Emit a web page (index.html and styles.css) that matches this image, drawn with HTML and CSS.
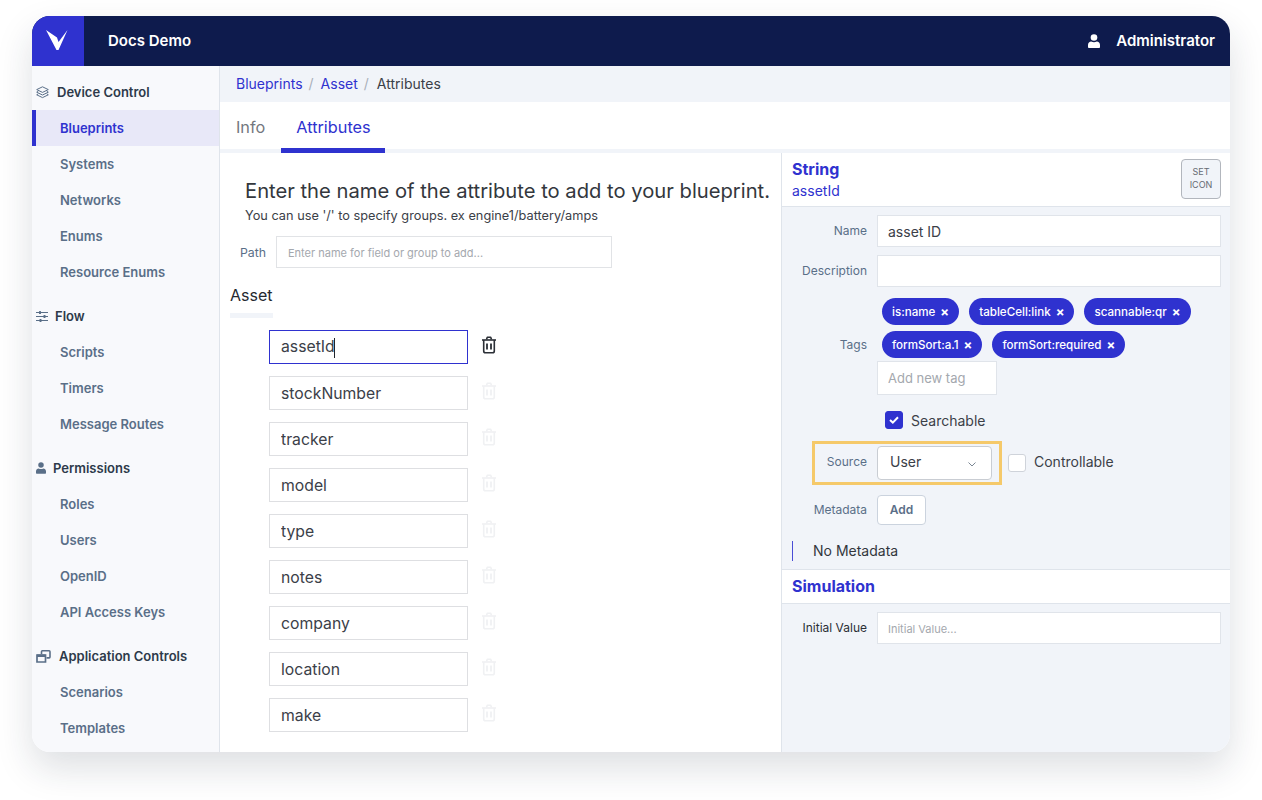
FILE: index.html
```html
<!DOCTYPE html>
<html>
    <head>
        <meta charset="UTF-8">
        <title>Docs Demo - Attributes</title>
        <link rel="stylesheet" href="styles.css">
    </head>
    <body>
        <div class="window">
            <header class="topbar">
                <div class="logo">
                    <svg width="24" height="24" viewBox="0 0 24 24"><path d="M0 1 L11 8.500 L12.500 13 L21.500 1 L12.500 21 L10.500 21 Z" fill="#fff"/></svg>
                </div>
                <div class="app-name">Docs Demo</div>
                <div class="user">
                    <svg width="12" height="14" viewBox="0 0 12 14"><circle cx="6" cy="3.500" r="3.300" fill="#fff"/><path d="M0.800 14 C0.300 14 0 13.600 0 13 L0 11 C0 9 1.500 7.600 3.200 7.600 C4.800 8.500 7.200 8.500 8.800 7.600 C10.500 7.600 12 9 12 11 L12 13 C12 13.600 11.700 14 11.200 14 Z" fill="#fff"/></svg>
                    <span>Administrator</span>
                </div>
            </header>
            <div class="body">
                <nav class="sidebar">
                    <div class="nav-group">
                        <div class="nav-head">
                            <svg class="head-icon" width="13" height="13" viewBox="0 0 13 13" fill="none" stroke="#5a6f88" stroke-width="1" stroke-linejoin="round"><path d="M6.500 0.800 L12.300 3.600 L6.500 6.400 L0.700 3.600 Z"/><path d="M2.200 5.300 L0.700 6.200 L6.500 9 L12.300 6.200 L10.800 5.300"/><path d="M2.200 7.900 L0.700 8.800 L6.500 11.600 L12.300 8.800 L10.800 7.900"/></svg>
                            <span class="head-device">Device Control</span>
                        </div>
                        <a class="nav-item active">Blueprints</a>
                        <a class="nav-item">Systems</a>
                        <a class="nav-item">Networks</a>
                        <a class="nav-item">Enums</a>
                        <a class="nav-item">Resource Enums</a>
                    </div>
                    <div class="nav-group">
                        <div class="nav-head">
                            <svg class="head-icon" width="12" height="11" viewBox="0 0 12 11" fill="#5a6f88"><rect x="0" y="1" width="12" height="1"/><rect x="0" y="5" width="12" height="1"/><rect x="0" y="9" width="12" height="1"/><rect x="3" y="0" width="2" height="3" rx="0.500"/><rect x="7.500" y="4" width="2" height="3" rx="0.500"/><rect x="3.500" y="8" width="2" height="3" rx="0.500"/></svg>
                            <span class="head-flow">Flow</span>
                        </div>
                        <a class="nav-item">Scripts</a>
                        <a class="nav-item">Timers</a>
                        <a class="nav-item">Message Routes</a>
                    </div>
                    <div class="nav-group">
                        <div class="nav-head">
                            <svg class="head-icon" width="10" height="12" viewBox="0 0 12 14"><circle cx="6" cy="3.500" r="3.300" fill="#5a6f88"/><path d="M0.800 14 C0.300 14 0 13.600 0 13 L0 11 C0 9 1.500 7.600 3.200 7.600 C4.800 8.500 7.200 8.500 8.800 7.600 C10.500 7.600 12 9 12 11 L12 13 C12 13.600 11.700 14 11.200 14 Z" fill="#5a6f88"/></svg>
                            <span class="head-perm">Permissions</span>
                        </div>
                        <a class="nav-item">Roles</a>
                        <a class="nav-item">Users</a>
                        <a class="nav-item">OpenID</a>
                        <a class="nav-item">API Access Keys</a>
                    </div>
                    <div class="nav-group">
                        <div class="nav-head">
                            <svg class="head-icon" width="15" height="13" viewBox="0 0 15 13" fill="none" stroke="#5a6f88"><path d="M5.500 4 L5.500 1.700 Q5.500 0.800 6.400 0.800 L13.100 0.800 Q14 0.800 14 1.700 L14 7 Q14 7.900 13.100 7.900 L10.500 7.900" stroke-width="1.600"/><path d="M1 5 L9.500 5 L9.500 12 L1 12 Z" stroke-width="1.700"/><rect x="1" y="4.500" width="8.500" height="2.500" fill="#5a6f88" stroke="none"/></svg>
                            <span class="head-app">Application Controls</span>
                        </div>
                        <a class="nav-item">Scenarios</a>
                        <a class="nav-item">Templates</a>
                    </div>
                </nav>
                <div class="main">
                    <div class="crumbs">
                        <a>Blueprints</a><span class="sep">/</span><a>Asset</a><span class="sep">/</span><span class="current">Attributes</span>
                    </div>
                    <div class="tabs">
                        <div class="tab">Info</div>
                        <div class="tab selected">Attributes</div>
                    </div>
                    <div class="panes">
                        <section class="left-pane">
                            <div class="intro">
                                <h2>Enter the name of the attribute to add to your blueprint.</h2>
                                <p>You can use '/' to specify groups. ex engine1/battery/amps</p>
                            </div>
                            <div class="path-row">
                                <label>Path</label>
                                <input class="path-input" placeholder="Enter name for field or group to add...">
                            </div>
                            <div class="group-name">Asset</div>
                            <div class="group-bar"></div>
                            <div class="attr-list">
                                <div class="attr-row">
                                    <div class="attr-field focused">assetI<span class="last">d</span><span class="caret"></span></div>
                                    <svg class="trash on" width="16" height="18" viewBox="0 0 16 18" fill="none" stroke="currentColor" stroke-width="1.600" stroke-linejoin="round"><path d="M1 4 L15 4"/><path d="M5.500 3.500 L6.300 1.300 L9.700 1.300 L10.500 3.500"/><path d="M2.700 4 L2.700 15 Q2.700 16.800 4.500 16.800 L11.500 16.800 Q13.300 16.800 13.300 15 L13.300 4"/><path d="M6 7.500 L6 13.500 M10 7.500 L10 13.500" stroke-width="1.800"/></svg>
                                </div>
                                <div class="attr-row">
                                    <input class="attr-field" value="stockNumber">
                                    <svg class="trash" width="16" height="18" viewBox="0 0 16 18" fill="none" stroke="currentColor" stroke-width="1.600" stroke-linejoin="round"><path d="M1 4 L15 4"/><path d="M5.500 3.500 L6.300 1.300 L9.700 1.300 L10.500 3.500"/><path d="M2.700 4 L2.700 15 Q2.700 16.800 4.500 16.800 L11.500 16.800 Q13.300 16.800 13.300 15 L13.300 4"/><path d="M6 7.500 L6 13.500 M10 7.500 L10 13.500" stroke-width="1.800"/></svg>
                                </div>
                                <div class="attr-row">
                                    <input class="attr-field" value="tracker">
                                    <svg class="trash" width="16" height="18" viewBox="0 0 16 18" fill="none" stroke="currentColor" stroke-width="1.600" stroke-linejoin="round"><path d="M1 4 L15 4"/><path d="M5.500 3.500 L6.300 1.300 L9.700 1.300 L10.500 3.500"/><path d="M2.700 4 L2.700 15 Q2.700 16.800 4.500 16.800 L11.500 16.800 Q13.300 16.800 13.300 15 L13.300 4"/><path d="M6 7.500 L6 13.500 M10 7.500 L10 13.500" stroke-width="1.800"/></svg>
                                </div>
                                <div class="attr-row">
                                    <input class="attr-field" value="model">
                                    <svg class="trash" width="16" height="18" viewBox="0 0 16 18" fill="none" stroke="currentColor" stroke-width="1.600" stroke-linejoin="round"><path d="M1 4 L15 4"/><path d="M5.500 3.500 L6.300 1.300 L9.700 1.300 L10.500 3.500"/><path d="M2.700 4 L2.700 15 Q2.700 16.800 4.500 16.800 L11.500 16.800 Q13.300 16.800 13.300 15 L13.300 4"/><path d="M6 7.500 L6 13.500 M10 7.500 L10 13.500" stroke-width="1.800"/></svg>
                                </div>
                                <div class="attr-row">
                                    <input class="attr-field" value="type">
                                    <svg class="trash" width="16" height="18" viewBox="0 0 16 18" fill="none" stroke="currentColor" stroke-width="1.600" stroke-linejoin="round"><path d="M1 4 L15 4"/><path d="M5.500 3.500 L6.300 1.300 L9.700 1.300 L10.500 3.500"/><path d="M2.700 4 L2.700 15 Q2.700 16.800 4.500 16.800 L11.500 16.800 Q13.300 16.800 13.300 15 L13.300 4"/><path d="M6 7.500 L6 13.500 M10 7.500 L10 13.500" stroke-width="1.800"/></svg>
                                </div>
                                <div class="attr-row">
                                    <input class="attr-field" value="notes">
                                    <svg class="trash" width="16" height="18" viewBox="0 0 16 18" fill="none" stroke="currentColor" stroke-width="1.600" stroke-linejoin="round"><path d="M1 4 L15 4"/><path d="M5.500 3.500 L6.300 1.300 L9.700 1.300 L10.500 3.500"/><path d="M2.700 4 L2.700 15 Q2.700 16.800 4.500 16.800 L11.500 16.800 Q13.300 16.800 13.300 15 L13.300 4"/><path d="M6 7.500 L6 13.500 M10 7.500 L10 13.500" stroke-width="1.800"/></svg>
                                </div>
                                <div class="attr-row">
                                    <input class="attr-field" value="company">
                                    <svg class="trash" width="16" height="18" viewBox="0 0 16 18" fill="none" stroke="currentColor" stroke-width="1.600" stroke-linejoin="round"><path d="M1 4 L15 4"/><path d="M5.500 3.500 L6.300 1.300 L9.700 1.300 L10.500 3.500"/><path d="M2.700 4 L2.700 15 Q2.700 16.800 4.500 16.800 L11.500 16.800 Q13.300 16.800 13.300 15 L13.300 4"/><path d="M6 7.500 L6 13.500 M10 7.500 L10 13.500" stroke-width="1.800"/></svg>
                                </div>
                                <div class="attr-row">
                                    <input class="attr-field" value="location">
                                    <svg class="trash" width="16" height="18" viewBox="0 0 16 18" fill="none" stroke="currentColor" stroke-width="1.600" stroke-linejoin="round"><path d="M1 4 L15 4"/><path d="M5.500 3.500 L6.300 1.300 L9.700 1.300 L10.500 3.500"/><path d="M2.700 4 L2.700 15 Q2.700 16.800 4.500 16.800 L11.500 16.800 Q13.300 16.800 13.300 15 L13.300 4"/><path d="M6 7.500 L6 13.500 M10 7.500 L10 13.500" stroke-width="1.800"/></svg>
                                </div>
                                <div class="attr-row">
                                    <input class="attr-field" value="make">
                                    <svg class="trash" width="16" height="18" viewBox="0 0 16 18" fill="none" stroke="currentColor" stroke-width="1.600" stroke-linejoin="round"><path d="M1 4 L15 4"/><path d="M5.500 3.500 L6.300 1.300 L9.700 1.300 L10.500 3.500"/><path d="M2.700 4 L2.700 15 Q2.700 16.800 4.500 16.800 L11.500 16.800 Q13.300 16.800 13.300 15 L13.300 4"/><path d="M6 7.500 L6 13.500 M10 7.500 L10 13.500" stroke-width="1.800"/></svg>
                                </div>
                            </div>
                        </section>
                        <section class="right-pane">
                            <div class="type-head">
                                <div>
                                    <div class="type-title">String</div>
                                    <div class="type-key">assetId</div>
                                </div>
                                <div class="set-icon">SET<br>ICON</div>
                            </div>
                            <div class="form">
                                <div class="form-row">
                                    <label>Name</label>
                                    <input class="text-input filled" value="asset ID">
                                </div>
                                <div class="form-row">
                                    <label>Description</label>
                                    <input class="text-input">
                                </div>
                                <div class="tags-row">
                                    <label>Tags</label>
                                    <div class="tags">
                                        <span class="tag">is:name<i>×</i></span>
                                        <span class="tag">tableCell:link<i>×</i></span>
                                        <span class="tag">scannable:qr<i>×</i></span>
                                        <span class="tag">formSort:a.1<i>×</i></span>
                                        <span class="tag">formSort:required<i>×</i></span>
                                    </div>
                                </div>
                                <input class="tag-input" placeholder="Add new tag">
                                <div class="search-row">
                                    <span class="check on">
                                        <svg width="10" height="8" viewBox="0 0 10 8" fill="none" stroke="#fff" stroke-width="2"><path d="M1 4 L3.800 6.600 L9 1.200"/></svg>
                                    </span>
                                    <span>Searchable</span>
                                </div>
                                <div class="source-row">
                                    <div class="source-box">
                                        <label>Source</label>
                                        <div class="select">
                                            <span>User</span>
                                            <svg width="8" height="5" viewBox="0 0 8 5" fill="none" stroke="#7b8794"><path d="M0.500 0.500 L4 4 L7.500 0.500"/></svg>
                                        </div>
                                    </div>
                                    <span class="check"></span>
                                    <span class="check-text">Controllable</span>
                                </div>
                                <div class="meta-row">
                                    <label>Metadata</label>
                                    <button class="add-btn">Add</button>
                                </div>
                                <div class="no-meta">No Metadata</div>
                            </div>
                            <div class="sim-head">Simulation</div>
                            <div class="form sim-form">
                                <div class="form-row">
                                    <label class="dark">Initial Value</label>
                                    <input class="text-input small" placeholder="Initial Value...">
                                </div>
                            </div>
                        </section>
                    </div>
                </div>
            </div>
        </div>
    </body>
</html>
```

FILE: styles.css
```css
*{
    box-sizing: border-box;
}
html, body{
    height: 100%;
}
body{
    margin: 0;
    padding: 16px 32px 48px 32px;
    background-color: #fff;
    font-family: Inter, "Liberation Sans", sans-serif;
    color: #2b2f36;
    overflow: hidden;
}
input{
    font-family: inherit;
    outline: none;
}
input::placeholder{
    color: #a4a8ae;
    opacity: 1;
}
.window{
    width: 1198px;
    height: 736px;
    border-radius: 18px;
    overflow: hidden;
    display: flex;
    flex-direction: column;
    background-color: #fff;
    box-shadow: 0 16px 36px rgba(30, 40, 60, 0.15);
}
.topbar{
    height: 50px;
    flex: none;
    display: flex;
    align-items: center;
    background-color: #0e1b4d;
    color: #fff;
}
.logo{
    width: 52px;
    height: 50px;
    display: flex;
    align-items: center;
    justify-content: center;
    background-color: #2f32cf;
}
.app-name{
    margin-left: 24px;
    font-size: 15px;
    font-weight: 600;
    margin-top: -2px;
}
.user{
    margin-left: auto;
    padding-right: 15px;
    display: flex;
    align-items: center;
    gap: 16px;
    font-size: 15px;
    font-weight: 600;
}
.user span{
    margin-top: -2px;
}
.body{
    flex: 1;
    min-height: 0;
    display: flex;
}
.sidebar{
    width: 188px;
    flex: none;
    padding-top: 8px;
    background-color: #f8f9fc;
    border-right: 1px solid #dfe4eb;
}
.nav-group{
    margin-bottom: 8px;
}
.nav-head{
    height: 36px;
    display: flex;
    align-items: center;
    padding-left: 4px;
    font-size: 13px;
    font-weight: 600;
    color: #2d3a4a;
}
.head-device{
    margin-left: 8px;
}
.head-flow{
    margin-left: 7px;
}
.head-perm{
    margin-left: 7px;
}
.head-app{
    margin-left: 8px;
}
.nav-item{
    height: 36px;
    display: flex;
    align-items: center;
    padding-left: 28px;
    font-size: 13px;
    font-weight: 600;
    color: #5a6f88;
}
.nav-item.active{
    padding-left: 24px;
    border-left: 4px solid #2f32cf;
    background-color: #e8e8f8;
    color: #2f32cf;
}
.main{
    flex: 1;
    min-width: 0;
    display: flex;
    flex-direction: column;
    background-color: #f1f4f9;
}
.crumbs{
    height: 36px;
    flex: none;
    display: flex;
    align-items: center;
    padding: 0 0 2px 16px;
    font-size: 14px;
    color: #2f32cf;
}
.sep{
    margin: 0 7px 0 6px;
    color: #a9b0ba;
}
.current{
    margin-left: 1px;
    color: #3b4048;
}
.tabs{
    height: 47px;
    flex: none;
    display: flex;
    background-color: #fff;
}
.tab{
    padding: 0 16px;
    font-size: 16.300px;
    line-height: 50px;
    color: #73777e;
}
.tab.selected{
    width: 104px;
    height: 51px;
    padding: 0 0 0 15px;
    color: #2f32cf;
    border-bottom: 5px solid #2f32cf;
}
.panes{
    flex: 1;
    min-height: 0;
    margin-top: 4px;
    display: flex;
}
.left-pane{
    width: 562px;
    flex: none;
    padding: 0 0 0 10px;
    background-color: #fff;
    border-right: 1px solid #dfe4eb;
}
.intro{
    padding: 26px 0 0 15px;
}
.intro h2{
    margin: 0;
    font-size: 20.200px;
    font-weight: 400;
    line-height: 24px;
    color: #33373d;
    white-space: nowrap;
}
.intro p{
    margin: 4px 0 0 0;
    font-size: 12.750px;
    line-height: 18px;
    color: #3b4048;
}
.path-row{
    margin-top: 11px;
    display: flex;
    align-items: center;
    padding-left: 10px;
}
.path-row label{
    width: 36px;
    font-size: 12.300px;
    color: #5a6f88;
}
.path-input{
    width: 336px;
    height: 32px;
    padding: 2px 11px 0 11px;
    border: 1px solid #e1e3e6;
    font-size: 11px;
}
.group-name{
    margin-top: 17px;
    font-size: 16px;
    line-height: 20px;
    color: #25292f;
}
.group-bar{
    width: 43px;
    height: 5px;
    margin-top: 8px;
    background-color: #f1f4f9;
}
.attr-list{
    margin-top: 12px;
    padding-left: 39px;
    display: flex;
    flex-direction: column;
    gap: 12px;
}
.attr-row{
    display: flex;
    align-items: center;
    gap: 13px;
}
.attr-field{
    width: 199px;
    height: 34px;
    padding: 0 11px;
    border: 1px solid #dedfe2;
    background-color: #fff;
    font-size: 15.750px;
    line-height: 32px;
    color: #3b4048;
}
.attr-field.focused{
    border-color: #2f32cf;
    white-space: nowrap;
}
.caret{
    display: inline-block;
    width: 1px;
    height: 20px;
    margin-left: -1px;
    vertical-align: middle;
    background-color: #20242a;
}
.trash{
    color: #f0f1f3;
    margin-top: -4px;
}
.trash.on{
    color: #2b2f36;
}
.right-pane{
    flex: 1;
    min-width: 0;
    display: flex;
    flex-direction: column;
}
.type-head{
    height: 54px;
    flex: none;
    display: flex;
    justify-content: space-between;
    padding: 6px 9px 0 10px;
    background-color: #fff;
    border-bottom: 1px solid #dfe4eb;
}
.type-title{
    font-size: 16px;
    font-weight: 700;
    line-height: 20px;
    color: #2f32cf;
}
.type-key{
    margin-top: 3px;
    font-size: 14px;
    line-height: 18px;
    color: #2f32cf;
}
.set-icon{
    width: 40px;
    height: 40px;
    padding-top: 5px;
    border: 1px solid #b2b6bd;
    border-radius: 4px;
    background-color: #f1f4f9;
    font-size: 9px;
    line-height: 13px;
    text-align: center;
    color: #666b73;
}
.form{
    padding: 8px 9px 0 10px;
}
.form-row{
    display: flex;
    align-items: center;
    margin-bottom: 8px;
}
.form label{
    width: 75px;
    margin-right: 10px;
    padding-bottom: 2px;
    flex: none;
    font-size: 12px;
    text-align: right;
    color: #5a6f88;
}
.form label.dark{
    color: #2b2f36;
}
.text-input{
    flex: 1;
    min-width: 0;
    height: 32px;
    padding: 0 10px;
    border: 1px solid #e0e4ea;
    background-color: #fff;
    font-size: 14px;
    color: #3b4048;
}
.text-input.small{
    padding-top: 2px;
    font-size: 11px;
}
.tags-row{
    display: flex;
    align-items: flex-end;
    margin-top: 11px;
}
.tags-row label{
    padding-bottom: 0;
    line-height: 27px;
}
.tags{
    width: 330px;
    margin-left: 5px;
    display: flex;
    flex-wrap: wrap;
    gap: 6px 10px;
}
.tag{
    height: 27px;
    padding: 0 10px;
    display: flex;
    align-items: center;
    border-radius: 14px;
    background-color: #2f32cf;
    font-size: 11.600px;
    font-weight: 500;
    color: #fff;
}
.tag i{
    margin-left: 5px;
    font-style: normal;
    font-size: 13px;
    font-weight: 700;
}
.tag-input{
    display: block;
    width: 120px;
    height: 34px;
    margin: 3px 0 0 85px;
    padding: 0 10px;
    border: 1px solid #e0e4ea;
    background-color: #fff;
    font-size: 13px;
}
.search-row{
    margin: 16px 0 0 93px;
    display: flex;
    align-items: center;
    gap: 8px;
    font-size: 14px;
    color: #3b4048;
}
.check{
    width: 18px;
    height: 18px;
    flex: none;
    display: flex;
    align-items: center;
    justify-content: center;
    border: 1px solid #cfd3da;
    border-radius: 3px;
    background-color: #fff;
}
.check.on{
    border-color: #2f32cf;
    background-color: #2f32cf;
}
.source-row{
    margin: 12px 0 0 20px;
    display: flex;
    align-items: center;
}
.source-box{
    width: 190px;
    height: 44px;
    margin-right: 6px;
    display: flex;
    align-items: center;
    border: 3px solid #f5c96a;
}
.source-box label{
    width: 52px;
    margin-right: 10px;
    padding-bottom: 4px;
}
.select{
    width: 115px;
    height: 34px;
    padding: 0 15px 4px 12px;
    display: flex;
    align-items: center;
    justify-content: space-between;
    border: 1px solid #c9cdd3;
    border-radius: 4px;
    background-color: #fff;
    font-size: 14px;
    color: #3b4048;
}
.select svg{
    margin-top: 6px;
}
.check-text{
    margin-left: 8px;
    font-size: 14px;
    color: #3b4048;
    padding-bottom: 3px;
}
.meta-row{
    margin-top: 10px;
    display: flex;
    align-items: center;
}
.add-btn{
    width: 49px;
    height: 30px;
    padding: 0 0 2px 0;
    border: 1px solid #cbd3de;
    border-radius: 4px;
    background-color: #fff;
    font-family: inherit;
    font-size: 12px;
    font-weight: 600;
    color: #5a6f88;
}
.no-meta{
    height: 20px;
    margin-top: 16px;
    padding-left: 20px;
    border-left: 1px solid #4a4dd6;
    font-size: 14px;
    line-height: 20px;
    color: #33373d;
}
.sim-head{
    height: 35px;
    margin-top: 8px;
    flex: none;
    padding-left: 10px;
    background-color: #fff;
    border-top: 1px solid #dfe4eb;
    border-bottom: 1px solid #dfe4eb;
    font-size: 16px;
    font-weight: 700;
    line-height: 32px;
    color: #2f32cf;
}
.sim-form{
    padding-top: 8px;
}
```
